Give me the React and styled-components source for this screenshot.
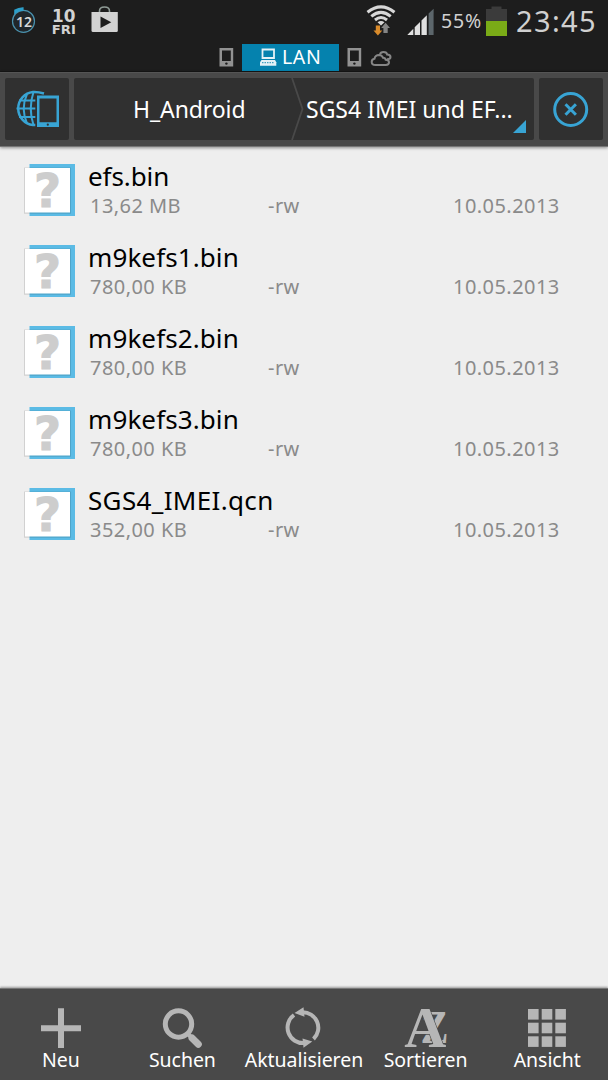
import React from 'react'
import styled, { createGlobalStyle } from 'styled-components'

const GlobalStyle = createGlobalStyle`
*{
    box-sizing: border-box;
}
body{
    margin: 0;
    background-color: #eeeeee;
    font-family: "Noto Sans", "Open Sans", sans-serif;
}
svg{
    display: block;
    flex-shrink: 0;
}
`

const Screen = styled.div`
width: 608px;
height: 1080px;
display: flex;
flex-direction: column;
overflow: hidden;
background-color: #eeeeee;
`

const StatusBar = styled.header`
height: 44px;
display: flex;
justify-content: space-between;
background-color: #1d1d1d;
color: #d0d0d0;
`

const Notifications = styled.div`
display: flex;
`

const Indicators = styled.div`
display: flex;
`

const Battery = styled.span`
width: 45px;
font-size: 19.5px;
line-height: 26px;
padding-top: 8px;
letter-spacing: 0.9px;
white-space: nowrap;
`

const Clock = styled.span`
width: 101px;
padding: 1px 0 0 9px;
font-size: 29px;
line-height: 40px;
letter-spacing: 1.35px;
white-space: nowrap;
`

const Windows = styled.nav`
height: 28px;
display: flex;
padding-left: 218px;
background-color: #1d1d1d;
border-bottom: 1px solid #161616;
`

const ActiveWindow = styled.div`
width: 97px;
height: 27px;
margin: 0 7px 0 7px;
padding-left: 17px;
display: flex;
gap: 5px;
color: #fff;
background-color: #0582ae;
font-size: 19.5px;
line-height: 26px;
letter-spacing: 0.6px;
`

const Toolbar = styled.div`
height: 75px;
padding: 5px 5px 7px;
display: flex;
gap: 5px;
background-color: #494949;
border-top: 1px solid #555;
border-bottom: 1px solid #777;
box-shadow: 0 1px 3px rgba(0,0,0,.4);
z-index: 1;
`

const ToolButton = styled.button`
width: 64px;
height: 62px;
padding: 0;
border: 0;
border-radius: 2px;
background-color: #303030;
`

const Path = styled.div`
position: relative;
width: 460px;
height: 62px;
display: flex;
border-radius: 2px;
background-color: #303030;
color: #fff;
font-size: 23px;
line-height: 62px;
white-space: nowrap;
.corner{
    position: absolute;
    right: 8px;
    bottom: 7px;
}
`

const Crumb = styled.span`
width: ${props => props.$width};
padding-left: ${props => props.$left};
letter-spacing: ${props => props.$spacing || 0};
`

const List = styled.main`
flex: 1;
padding-top: 3px;
`

const Row = styled.div`
height: 81px;
padding: 13px 0 0 24px;
display: flex;
gap: 12px;
`

const Details = styled.div`
flex: 1;
`

const Name = styled.div`
margin-top: -4px;
height: 33px;
color: #000;
font-size: 26px;
line-height: 34px;
letter-spacing: ${props => props.$spacing};
`

const Meta = styled.div`
display: grid;
grid-template-columns: 178px 185px 1fr;
padding-left: 2px;
color: #8a8a8a;
font-size: 20px;
line-height: 27px;
letter-spacing: 0.45px;
`

const Footer = styled.footer`
height: 92px;
display: grid;
grid-template-columns: repeat(5, 1fr);
background-color: #494949;
border-top: 1px solid #777;
box-shadow: 0 -1px 2px rgba(0,0,0,.35);
`

const Action = styled.div`
display: flex;
flex-direction: column;
align-items: center;
padding-top: 18px;
color: #fff;
font-size: 19.5px;
line-height: 26px;
letter-spacing: -0.05px;
svg{
    margin-bottom: -2px;
}
`

const Timer = () => (
  <svg width="50" height="44" viewBox="0 0 50 44">
    <circle cx="23.5" cy="21.3" r="11" fill="#20262a" stroke="#4a91ad" strokeWidth="1.2" />
    <path d="M14.2 14.5L14.2 9.8Q18.5 7 23.6 7.2L23.6 10.7Q18 11 14.2 14.5Z" fill="#2d9fca" />
    <text x="16" y="26.5" fontSize="14.5" fontWeight="600" fill="#d8d8d8" textLength="16" lengthAdjust="spacingAndGlyphs">12</text>
  </svg>
)

const Day = () => (
  <svg width="30" height="44" viewBox="50 0 30 44" fill="#d2d2d2" fontFamily="DejaVu Sans" fontWeight="700">
    <text x="52" y="22.3" fontSize="18" textLength="23.5" lengthAdjust="spacingAndGlyphs">10</text>
    <text x="51.8" y="34" fontSize="11.5" textLength="24" lengthAdjust="spacingAndGlyphs">FRI</text>
  </svg>
)

const Store = () => (
  <svg width="42" height="44" viewBox="80 0 42 44">
    <path d="M99.5 14V11Q99.5 7 104.5 7Q109.5 7 109.5 11V14" fill="none" stroke="#8f9b96" strokeWidth="1.6" />
    <path d="M91.5 12H117.8V30.5Q117.8 32 116.5 32H93Q91.5 32 91.5 30.5Z" fill="#d2d2d2" />
    <path d="M100.5 16.5L111.3 22.3L100.5 28Z" fill="#1d1d1d" />
  </svg>
)

const Wifi = () => (
  <svg width="41" height="44" viewBox="364 0 41 44">
    <g fill="none" stroke="#d8d8d8" strokeWidth="3">
      <path d="M367.5 12.2Q381 1.5 394.5 12.2" />
      <path d="M371.3 16.3Q381 8.5 390.7 16.3" />
      <path d="M375 20Q381 15 387 20" />
    </g>
    <path d="M377.5 22.3Q381 19.8 384.5 22.3L381 25.5Z" fill="#d8d8d8" />
    <path d="M375.8 25.5H380V30.5H382.3L377.9 35.5L373.5 30.5H375.8Z" fill="#d98b2b" />
    <path d="M383.4 33V28H381.2L385.6 22.7L390 28H387.7V33Z" fill="#858585" />
  </svg>
)

const Signal = () => (
  <svg width="36" height="44" viewBox="405 0 36 44">
    <path d="M407.3 35L413.3 28.8V35Z" fill="#e0e0e0" />
    <path d="M414.7 27.3L420 22V35H414.7Z" fill="#e0e0e0" />
    <path d="M421.5 20.5L426.8 15.2V35H421.5Z" fill="#e0e0e0" />
    <path d="M428.6 13.5V35H433.6V8.8Z" fill="#5c666b" />
  </svg>
)

const BatteryIcon = () => (
  <svg width="21" height="44" viewBox="486 0 21 44">
    <path d="M486 9H491.5V6.5H501.5V9H507V21H486Z" fill="#3b3b3b" />
    <path d="M486 21H507V36H486Z" fill="#7aab17" />
  </svg>
)

const Phone = () => (
  <svg width="17" height="27" viewBox="0 0 17 27">
    <path d="M1.5 4H15.2V22.5H1.5Z" fill="#929292" />
    <path d="M4 6.5H12.8V17H4Z" fill="#1d1d1d" />
    <circle cx="8.4" cy="19.6" r="1.2" fill="#1d1d1d" />
  </svg>
)

const Laptop = () => (
  <svg width="18" height="27" viewBox="0 0 18 27">
    <path d="M3.5 5.5H15V14H3.5Z" fill="none" stroke="#e4f1f6" strokeWidth="1.8" />
    <path d="M2.5 16H16L17.3 18.3V21.7H1V18.3Z" fill="#e4f1f6" />
    <path d="M3 18.7H15.5" stroke="#0582ae" strokeWidth=".9" strokeDasharray="1.5 1" />
  </svg>
)

const Clouds = () => (
  <svg width="30" height="27" viewBox="0 0 30 27" fill="none" stroke="#868686" strokeWidth="2">
    <path d="M17 10.500Q17.500 8 20.500 8Q23.800 8 24.200 10.500Q27.500 10.700 27.500 13Q27.500 15.300 24 15.300" />
    <path d="M12.500 21Q8.700 21 8.700 17.900Q8.700 15 11.500 14.700Q12.200 11 16 11Q19 11.200 20 13.700Q22.300 13.800 22.700 15.700Q26 15.800 26 18.300Q26 21 22.800 21Z" />
  </svg>
)

const Network = () => (
  <svg width="64" height="62" viewBox="5 78 64 62">
    <g fill="none" stroke="#38a4d4" strokeWidth="2">
      <path d="M44 93.5Q38 91.7 33 92A16.600 16.600 0 0 0 33 125H39.5" strokeWidth="2.5" />
      <path d="M27 94Q20.500 108.500 27 123.500M33.500 92Q28 108.500 33.500 125" />
      <path d="M19 100.500H39M16.500 108.500H39M19 117H39" />
    </g>
    <path d="M40 94.500H35.300V127H40Z" fill="#303030" />
    <path d="M37 95.500H59V127H37ZM39.500 98.500V122.300H56.500V98.500Z" fill="#38a4d4" fillRule="evenodd" />
    <circle cx="47.8" cy="124.7" r="1.1" fill="#303030" />
  </svg>
)

const Close = () => (
  <svg width="64" height="62" viewBox="539 78 64 62" fill="none" stroke="#38a4d4">
    <circle cx="570.7" cy="109.5" r="16" strokeWidth="3" />
    <path d="M565.5 104.3L575.9 114.7M575.9 104.3L565.5 114.7" strokeWidth="3" />
  </svg>
)

const Divider = () => (
  <svg width="13" height="62" viewBox="0 0 13 62">
    <path d="M1 0L11.5 31L1 62" fill="none" stroke="#494949" strokeWidth="1.8" />
  </svg>
)

const Corner = () => (
  <svg className="corner" width="13" height="13" viewBox="0 0 13 13">
    <path d="M13 0V13H0Z" fill="#38a4d4" />
  </svg>
)

const FileIcon = () => (
  <svg width="52" height="54" viewBox="24 163 52 54">
    <path d="M29.5 164H75V216H29.5Z" fill="#5bbbe5" />
    <path d="M24 167.5H71V213.8H24Z" fill="#000" opacity=".12" />
    <path d="M25 168H70V212.5H25Z" fill="#fff" />
    <text x="34" y="206.5" fontFamily="DejaVu Sans" fontWeight="700" fontSize="46" textLength="27" lengthAdjust="spacingAndGlyphs" fill="#cdcdcd" stroke="#cdcdcd" strokeWidth="1">?</text>
  </svg>
)

const PlusIcon = () => (
  <svg width="42" height="42" viewBox="0 0 42 42">
    <path d="M18 1.3H24V18.3H41V24.3H24V41H18V24.3H1V18.3H18Z" fill="#b6b6b6" />
  </svg>
)

const SearchIcon = () => (
  <svg width="42" height="42" viewBox="0 0 42 42" fill="none" stroke="#b6b6b6">
    <circle cx="17.5" cy="17" r="13.2" strokeWidth="5" />
    <path d="M26.5 26.5L31 31" strokeWidth="4" />
    <path d="M31 31L37.3 37.3" strokeWidth="7" strokeLinecap="round" />
  </svg>
)

const RefreshIcon = () => (
  <svg width="42" height="42" viewBox="283 1007 42 42">
    <g fill="none" stroke="#b6b6b6" strokeWidth="4">
      <path d="M294 1015A15.500 15.500 0 0 0 304.500 1043" />
      <path d="M302 1012.300A15.500 15.500 0 0 1 313.500 1039" />
    </g>
    <path d="M294.500 1013L303.500 1007.300L304.500 1016.700ZM302.500 1038.500L312.300 1041.500L303.500 1047.700Z" fill="#b6b6b6" />
  </svg>
)

const SortIcon = () => (
  <svg width="46" height="42" viewBox="402 1007 46 42" overflow="visible" fontFamily="Liberation Serif" fontWeight="700" fill="#b6b6b6">
    <text x="419.5" y="1043" fontSize="46" textLength="28" lengthAdjust="spacingAndGlyphs">Z</text>
    <text x="403.3" y="1047" fontSize="57" textLength="42" lengthAdjust="spacingAndGlyphs" stroke="#494949" strokeWidth="1.2" paintOrder="stroke">A</text>
  </svg>
)

const GridIcon = () => (
  <svg width="42" height="42" viewBox="0 0 42 42" fill="#b6b6b6">
    {[2, 15.7, 29.3].map(y => [2, 15.7, 29.3].map(x => (
      <rect key={`${x}-${y}`} x={x} y={y} width="10.6" height="10.6" />
    )))}
  </svg>
)

const files = [
  { name: 'efs.bin', size: '13,62 MB', spacing: '-0.1px' },
  { name: 'm9kefs1.bin', size: '780,00 KB', spacing: '0.1px' },
  { name: 'm9kefs2.bin', size: '780,00 KB', spacing: '0.1px' },
  { name: 'm9kefs3.bin', size: '780,00 KB', spacing: '0.1px' },
  { name: 'SGS4_IMEI.qcn', size: '352,00 KB', spacing: '0.35px' },
]

const actions = [
  { label: 'Neu', Icon: PlusIcon },
  { label: 'Suchen', Icon: SearchIcon },
  { label: 'Aktualisieren', Icon: RefreshIcon },
  { label: 'Sortieren', Icon: SortIcon },
  { label: 'Ansicht', Icon: GridIcon },
]

const App = () => {
  return (
    <Screen>
        <GlobalStyle />
        <StatusBar>
            <Notifications>
                <Timer />
                <Day />
                <Store />
            </Notifications>
            <Indicators>
                <Wifi />
                <Signal />
                <Battery>55%</Battery>
                <BatteryIcon />
                <Clock>23:45</Clock>
            </Indicators>
        </StatusBar>
        <Windows>
            <Phone />
            <ActiveWindow>
                <Laptop />
                LAN
            </ActiveWindow>
            <Phone />
            <Clouds />
        </Windows>
        <Toolbar>
            <ToolButton><Network /></ToolButton>
            <Path>
                <Crumb $width="217px" $left="59px" $spacing="-0.1px">H_Android</Crumb>
                <Divider />
                <Crumb $width="230px" $left="2px">SGS4 IMEI und EF...</Crumb>
                <Corner />
            </Path>
            <ToolButton><Close /></ToolButton>
        </Toolbar>
        <List>
            {files.map(file => (
                <Row key={file.name}>
                    <FileIcon />
                    <Details>
                        <Name $spacing={file.spacing}>{file.name}</Name>
                        <Meta>
                            <span>{file.size}</span>
                            <span>-rw</span>
                            <span>10.05.2013</span>
                        </Meta>
                    </Details>
                </Row>
            ))}
        </List>
        <Footer>
            {actions.map(({ label, Icon }) => (
                <Action key={label}>
                    <Icon />
                    {label}
                </Action>
            ))}
        </Footer>
    </Screen>
  )
}

export default App;
